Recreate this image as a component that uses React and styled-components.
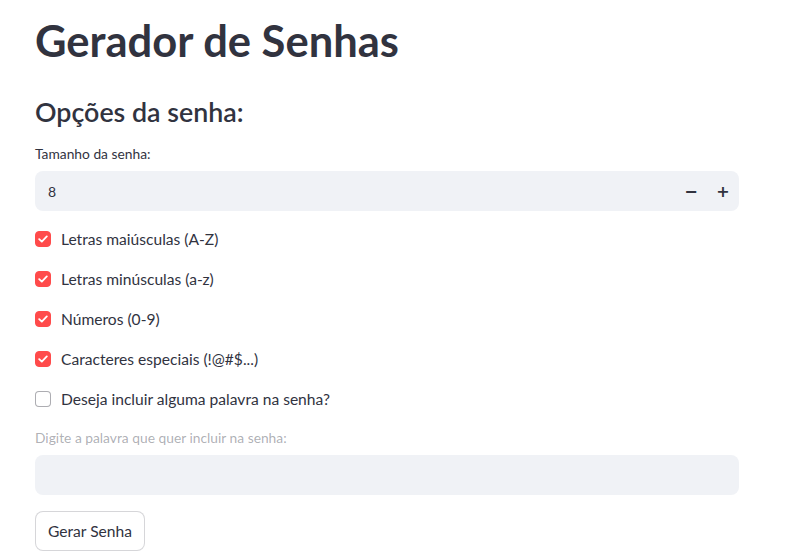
import React from "react";
import styled, { createGlobalStyle } from "styled-components";

const GlobalStyle = createGlobalStyle`
  html, body {
    margin: 0;
    padding: 0;
    background: #ffffff;
  }
  body {
    font-family: "Lato", "Noto Sans", sans-serif;
    color: rgb(49, 51, 63);
  }
`;

const Main = styled.div`
  width: 704px;
  padding: 14px 0 0 35px;
  display: flex;
  flex-direction: column;
`;

const Title = styled.h1`
  margin: 0;
  font-size: 43.5px;
  font-weight: 700;
  line-height: 52px;
  color: rgb(49, 51, 63);
`;

const Subtitle = styled.h3`
  margin: 28px 0 0;
  font-size: 26.8px;
  font-weight: 600;
  line-height: 36px;
`;

const Label = styled.div`
  margin-top: ${(p) => p.$top || 14}px;
  font-size: 13.8px;
  line-height: 18px;
  color: ${(p) => (p.$disabled ? "rgba(49, 51, 63, 0.4)" : "rgb(49, 51, 63)")};
`;

const Field = styled.div`
  margin-top: 8px;
  height: 40px;
  background: #f0f2f6;
  border-radius: 8px;
  display: flex;
  align-items: center;
  padding-left: 13px;
  font-size: 14px;
`;

const Value = styled.span`
  flex: 1;
`;

const StepButton = styled.span`
  width: 32px;
  height: 40px;
  display: flex;
  align-items: center;
  justify-content: center;
  font-size: 16px;
  font-weight: 700;
  font-family: "DejaVu Sans", sans-serif;
`;

const Options = styled.div`
  margin-top: 8px;
  display: flex;
  flex-direction: column;
`;

const CheckRow = styled.label`
  height: 40px;
  display: flex;
  align-items: center;
  gap: 10px;
  font-size: 15.6px;
`;

const Box = styled.span`
  width: 16px;
  height: 16px;
  box-sizing: border-box;
  border-radius: 4px;
  display: flex;
  align-items: center;
  justify-content: center;
  background: ${(p) => (p.$checked ? "#ff4b4b" : "#ffffff")};
  border: 1px solid ${(p) => (p.$checked ? "#ff4b4b" : "rgba(49, 51, 63, 0.4)")};
`;

const Button = styled.button`
  margin-top: 16px;
  align-self: flex-start;
  height: 40px;
  padding: 0 12px;
  background: #ffffff;
  border: 1px solid rgba(49, 51, 63, 0.2);
  border-radius: 8px;
  font-family: inherit;
  font-size: 15.6px;
  color: rgb(49, 51, 63);
`;

const Check = () => (
  <svg width="10" height="8" viewBox="0 0 10 8">
    <path d="M1.2 4.2 L3.8 6.6 L8.8 1.4" fill="none" stroke="#fff" strokeWidth="1.8" strokeLinecap="round" strokeLinejoin="round" />
  </svg>
);

const options = [
  { text: "Letras maiúsculas (A-Z)", checked: true },
  { text: "Letras minúsculas (a-z)", checked: true },
  { text: "Números (0-9)", checked: true },
  { text: "Caracteres especiais (!@#$...)", checked: true },
  { text: "Deseja incluir alguma palavra na senha?", checked: false },
];

export default function App() {
  return (
    <>
      <GlobalStyle />
      <Main>
        <Title>Gerador de Senhas</Title>
        <Subtitle>Opções da senha:</Subtitle>
        <Label $top={15}>Tamanho da senha:</Label>
        <Field>
          <Value>8</Value>
          <StepButton>−</StepButton>
          <StepButton>+</StepButton>
        </Field>
        <Options>
          {options.map((o) => (
            <CheckRow key={o.text}>
              <Box $checked={o.checked}>{o.checked && <Check />}</Box>
              {o.text}
            </CheckRow>
          ))}
        </Options>
        <Label $top={10} $disabled>Digite a palavra que quer incluir na senha:</Label>
        <Field />
        <Button>Gerar Senha</Button>
      </Main>
    </>
  );
}
